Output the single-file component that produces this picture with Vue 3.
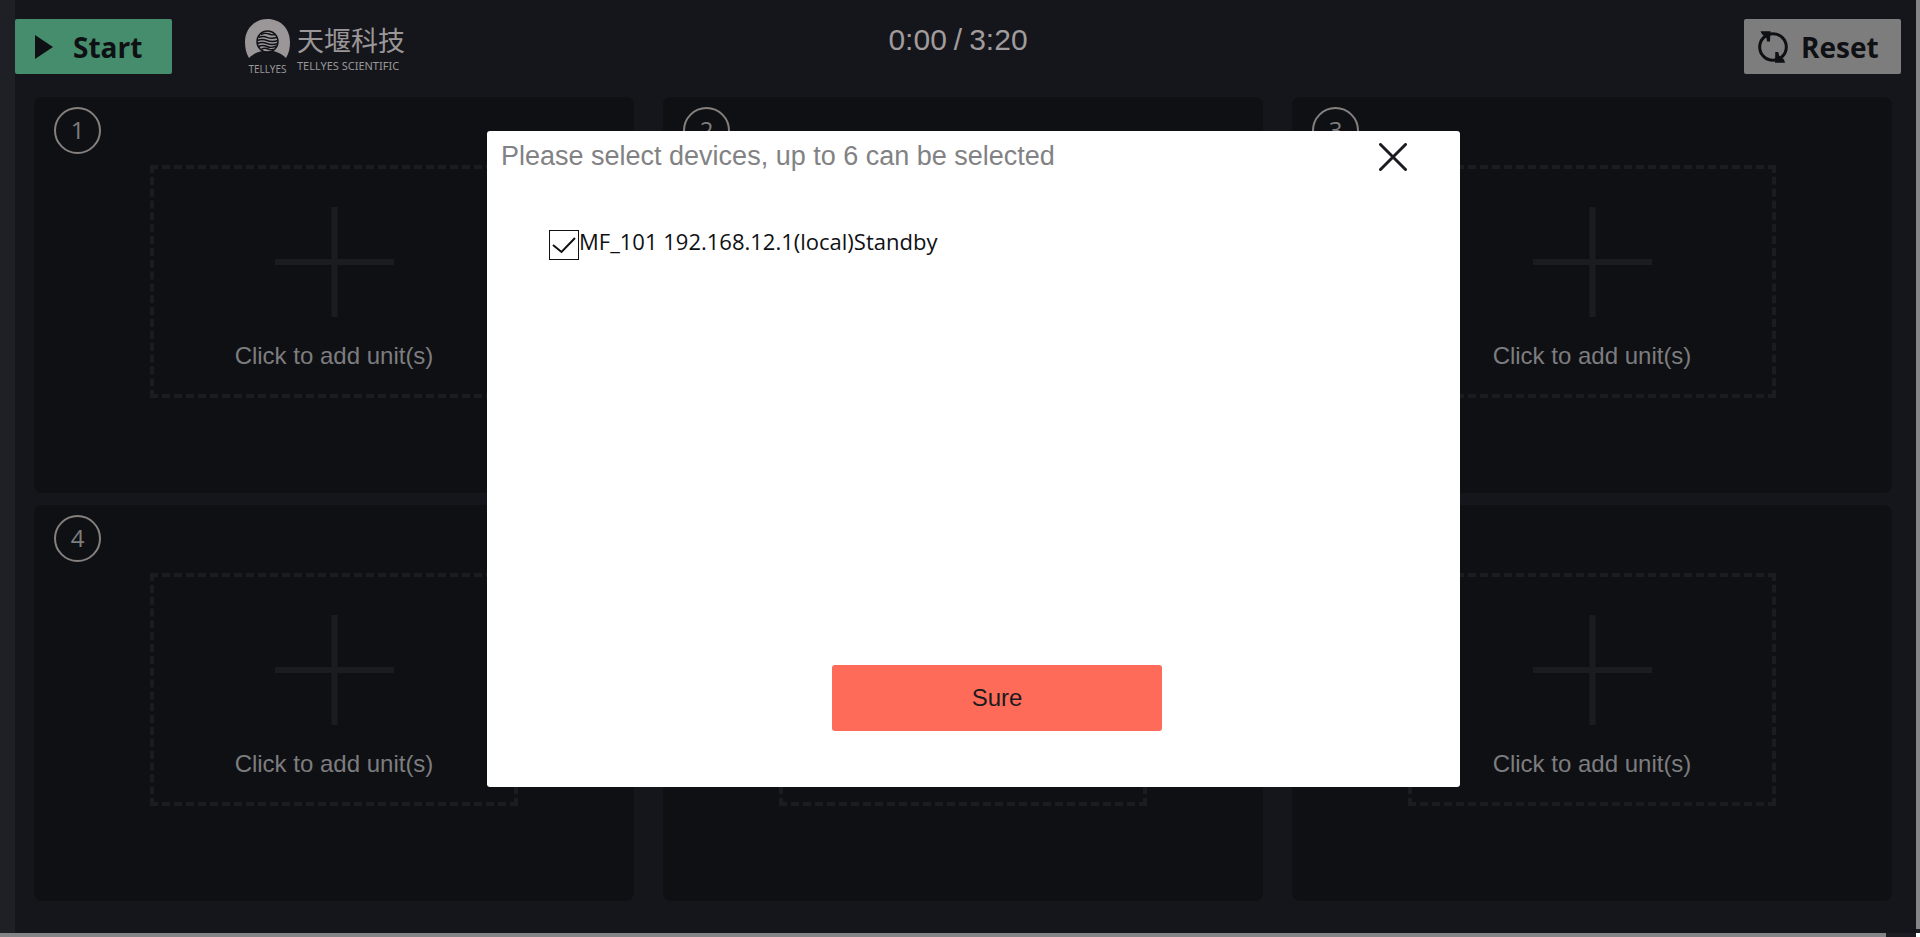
<script setup>
import { ref } from 'vue'

const units = [1, 2, 3, 4, 5, 6]
const devices = ref([
  { id: 'MF_101', label: 'MF_101 192.168.12.1(local)Standby', checked: true },
])
const open = ref(true)
</script>

<template>
  <div class="page">
    <aside class="strip"></aside>
    <main class="main">
      <header class="bar">
        <div class="left">
          <button class="action start" type="button">
            <svg width="18" height="24" viewBox="0 0 18 24" aria-hidden="true"><path d="M0 0L18 12L0 24Z" fill="#0f1014" /></svg>
            <span>Start</span>
          </button>
          <div class="logo">
            <div class="emblem">
              <svg width="45" height="40" viewBox="0 0 45 40" aria-hidden="true">
                <path d="M4 39C1 34 0 29 0 23C0 9 10 0 22.500 0S45 9 45 23C45 29 44 34 41 39C36 34 30 31.500 22.500 31.500S9 34 4 39Z" fill="#9b9698" />
                <circle cx="22.500" cy="22.500" r="10.500" fill="#9b9698" stroke="#101115" stroke-width="1.500" />
                <path d="M16 15.500Q20 13.500 24 15T30 15.500M13.500 18.500Q18 16.500 22 18.300T32 18.500M12.500 21.500Q17 19.500 22 21.500T33 21.500M12.500 24.500Q17 22.500 22 24.500T33 24.300M13.500 27.500Q18 25.500 22 27.500T31.500 27M16.500 30Q20 28.500 23 30T28.500 30" fill="none" stroke="#101115" stroke-width="1.400" />
              </svg>
              <span>TELLYES</span>
            </div>
            <div class="brand">
              <span class="cn">天堰科技</span>
              <span class="en">TELLYES SCIENTIFIC</span>
            </div>
          </div>
        </div>
        <div class="timer"><span>0:00</span><span>/</span><span>3:20</span></div>
        <button class="action reset" type="button">
          <svg width="30" height="33" viewBox="0 0 30 33" aria-hidden="true">
            <circle cx="15" cy="17" r="13.300" fill="none" stroke="#0f1014" stroke-width="3" />
            <path d="M2.500 1.200H12.500L12 11.500H9L8.500 8L4 4.200ZM27 32.800H17L17.300 22H20.300L21 25.500L26 29.500Z" fill="#0f1014" />
          </svg>
          <span>Reset</span>
        </button>
      </header>
      <section class="grid">
        <article v-for="n in units" :key="n" class="card">
          <span class="num">{{ n }}</span>
          <button class="add" type="button">
            <svg width="119" height="110" viewBox="0 0 119 110" aria-hidden="true">
              <path d="M0 55H119M59.500 0V110" stroke="#1b1c20" stroke-width="6" />
            </svg>
            <span>Click to add unit(s)</span>
          </button>
        </article>
      </section>
    </main>
    <div class="track-y"><div class="thumb-y"></div></div>
    <div class="track-x"><div class="thumb-x"></div></div>
    <div class="corner"></div>

    <div v-if="open" class="modal" role="dialog" aria-labelledby="dialog-title">
      <div class="modal-head">
        <h2 id="dialog-title">Please select devices, up to 6 can be selected</h2>
        <button class="close" type="button" aria-label="Close" @click="open = false">
          <svg width="28" height="28" viewBox="0 0 28 28" aria-hidden="true">
            <path d="M1.500 1.500L26.500 26.500M26.500 1.500L1.500 26.500" stroke="#1b1c22" stroke-width="3" stroke-linecap="round" />
          </svg>
        </button>
      </div>
      <div class="devices">
        <div v-for="d in devices" :key="d.id" class="device">
          <span class="box">
            <input :id="d.id" v-model="d.checked" type="checkbox" />
            <svg v-if="d.checked" width="24" height="18" viewBox="0 0 24 18" aria-hidden="true">
              <path d="M1 9L9.500 16L23 2" fill="none" stroke="#0f1014" stroke-width="2" />
            </svg>
          </span>
          <label :for="d.id">{{ d.label }}</label>
        </div>
      </div>
      <button class="sure" type="button" @click="open = false">Sure</button>
    </div>
  </div>
</template>

<style>
body {
  margin: 0;
  background: #15161b;
}
</style>

<style scoped>
.page {
  position: relative;
  box-sizing: border-box;
  min-height: 100vh;
  display: grid;
  grid-template-columns: 15px 1fr 4px;
  grid-template-rows: 1fr 4px;
  background: #15161b;
  font-family: "Liberation Sans", Arial, sans-serif;
}
button {
  font: inherit;
  border: 0;
  padding: 0;
  cursor: pointer;
}
svg {
  display: block;
  flex: none;
}
.strip {
  background: #1f2026;
}
.main {
  display: flex;
  flex-direction: column;
  min-width: 0;
}
.bar {
  display: grid;
  grid-template-columns: 1fr auto 1fr;
  align-items: start;
  height: 78px;
  padding: 19px 15px 0 0;
}
.left {
  display: flex;
  gap: 73px;
}
.action {
  display: flex;
  align-items: center;
  box-sizing: border-box;
  width: 157px;
  height: 55px;
  border-radius: 2px;
  color: #0f1014;
  font: bold 28px/40px "Open Sans", "Noto Sans", sans-serif;
}
.start {
  gap: 20px;
  padding-left: 20px;
  background: #458d6d;
}
.reset {
  justify-self: end;
  gap: 13px;
  padding-left: 14px;
  background: #7d7d7e;
}
.logo {
  display: flex;
  gap: 7px;
  color: #9b9698;
}
.emblem {
  display: flex;
  flex-direction: column;
  align-items: center;
  width: 45px;
  font: 10px/12px "Noto Sans", sans-serif;
}
.emblem span {
  margin-top: 4px;
}
.brand {
  display: flex;
  flex-direction: column;
  padding-top: 5px;
}
.cn {
  font: 27px/32px "Noto Sans CJK SC", sans-serif;
}
.en {
  font: 11px/16px "Noto Sans", sans-serif;
  white-space: nowrap;
  margin-top: 2px;
}
.timer {
  display: flex;
  gap: 7px;
  padding-top: 1px;
  color: #a09b9c;
  font-size: 30px;
  line-height: 40px;
}
.grid {
  flex: 1;
  display: grid;
  grid-template-columns: repeat(3, 1fr);
  grid-auto-rows: 1fr;
  gap: 12px 29px;
  padding: 0 24px 32px 19px;
}
.card {
  position: relative;
  box-sizing: border-box;
  min-height: 320px;
  padding-top: 68px;
  border-radius: 8px;
  background: #0f1014;
}
.num {
  position: absolute;
  left: 20px;
  top: 10px;
  box-sizing: border-box;
  width: 47px;
  height: 47px;
  border: 2px solid #85807e;
  border-radius: 50%;
  color: #7d7d7f;
  font: 24px/42px "Open Sans", sans-serif;
  text-align: center;
}
.add {
  display: flex;
  flex-direction: column;
  align-items: center;
  box-sizing: border-box;
  width: 368px;
  height: 233px;
  margin: 0 auto;
  padding-top: 38px;
  border: 4px dashed #1b1c20;
  background: none;
  color: #7d7d7f;
  font-size: 24px;
  line-height: 32px;
}
.add span {
  margin-top: 23px;
}
.track-y,
.track-x {
  background: #1d1c22;
}
.track-y {
  padding-bottom: 4px;
}
.thumb-y {
  height: 100%;
  background: #858486;
}
.track-x {
  grid-column: 1 / 3;
  padding-right: 30px;
}
.thumb-x {
  height: 100%;
  background: #858486;
}
.corner {
  background: #fff;
}
.modal {
  position: absolute;
  top: 131px;
  left: 487px;
  right: 460px;
  box-sizing: border-box;
  min-height: 656px;
  display: flex;
  flex-direction: column;
  padding-bottom: 56px;
  border-radius: 3px;
  background: #fff;
}
.modal-head {
  display: flex;
  justify-content: space-between;
  align-items: flex-start;
  padding: 9px 53px 0 14px;
}
h2 {
  margin: 0;
  color: #828284;
  font-weight: 400;
  font-size: 27px;
  line-height: 32px;
}
.close {
  margin-top: 3px;
  background: none;
}
.devices {
  flex: 1;
  padding: 58px 62px 0;
}
.device {
  display: flex;
  align-items: flex-start;
}
.box {
  position: relative;
  display: grid;
  place-items: center;
  width: 30px;
  height: 30px;
}
.box input {
  position: absolute;
  inset: 0;
  box-sizing: border-box;
  width: 100%;
  height: 100%;
  margin: 0;
  appearance: none;
  border: 1px solid #0f1014;
  background: #fff;
}
.box svg {
  position: relative;
  pointer-events: none;
}
label {
  color: #0f1014;
  font: 22px/22px "Open Sans", "Noto Sans", sans-serif;
}
.sure {
  align-self: center;
  width: 330px;
  height: 66px;
  margin-left: 47px;
  border-radius: 3px;
  background: #ff6b59;
  color: #1b1a1e;
  font-size: 24px;
}
</style>
